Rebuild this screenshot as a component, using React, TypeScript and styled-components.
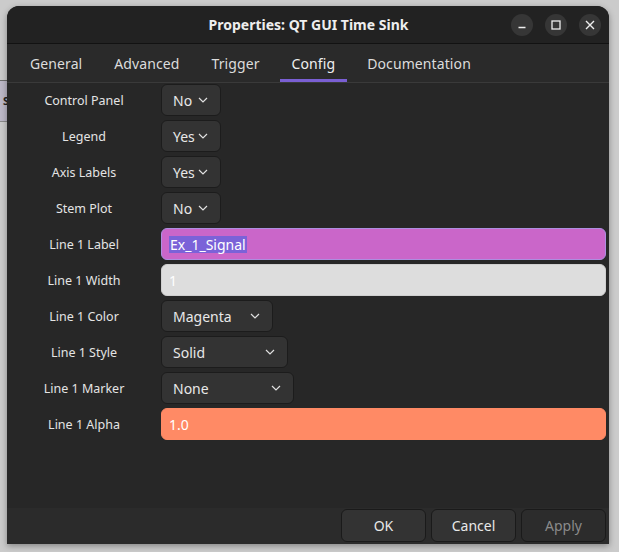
import styled, { createGlobalStyle } from "styled-components";

const GlobalStyle = createGlobalStyle`
  html, body {
    margin: 0;
    padding: 0;
    width: 619px;
    height: 552px;
    overflow: hidden;
    background: #cbcbcb;
    font-family: "Noto Sans", "DejaVu Sans", sans-serif;
  }
`;

type ComboRow = { kind: "combo"; label: string; value: string; width: number };
type FieldRow = {
  kind: "field";
  label: string;
  value: string;
  tone: "focused" | "light" | "salmon";
};
type Row = ComboRow | FieldRow;

const tabs = ["General", "Advanced", "Trigger", "Config", "Documentation"];

const rows: Row[] = [
  { kind: "combo", label: "Control Panel", value: "No", width: 60 },
  { kind: "combo", label: "Legend", value: "Yes", width: 60 },
  { kind: "combo", label: "Axis Labels", value: "Yes", width: 60 },
  { kind: "combo", label: "Stem Plot", value: "No", width: 60 },
  { kind: "field", label: "Line 1 Label", value: "Ex_1_Signal", tone: "focused" },
  { kind: "field", label: "Line 1 Width", value: "1", tone: "light" },
  { kind: "combo", label: "Line 1 Color", value: "Magenta", width: 112 },
  { kind: "combo", label: "Line 1 Style", value: "Solid", width: 127 },
  { kind: "combo", label: "Line 1 Marker", value: "None", width: 133 },
  { kind: "field", label: "Line 1 Alpha", value: "1.0", tone: "salmon" },
];

function Chevron() {
  return (
    <svg width="10" height="6" viewBox="0 0 10 6">
      <path d="M1 1l4 4 4-4" fill="none" stroke="#e0e0e0" strokeWidth="1.2" />
    </svg>
  );
}

function WindowControls() {
  return (
    <Controls>
      <CircleButton>
        <svg width="10" height="10" viewBox="0 0 10 10">
          <path d="M1.5 7.5h7" stroke="#eee" strokeWidth="1.3" />
        </svg>
      </CircleButton>
      <CircleButton>
        <svg width="10" height="10" viewBox="0 0 10 10">
          <rect x="1" y="1" width="8" height="8" fill="none" stroke="#eee" strokeWidth="1.3" />
        </svg>
      </CircleButton>
      <CircleButton>
        <svg width="10" height="10" viewBox="0 0 10 10">
          <path d="M1 1l8 8M9 1l-8 8" stroke="#eee" strokeWidth="1.4" />
        </svg>
      </CircleButton>
    </Controls>
  );
}

export default function App() {
  return (
    <>
      <GlobalStyle />
      <Desktop>
        <BehindApp>S</BehindApp>
        <Window>
          <TitleBar>
            <Title>Properties: QT GUI Time Sink</Title>
            <WindowControls />
          </TitleBar>
          <TabBar>
            {tabs.map((t) => (
              <Tab key={t} $active={t === "Config"}>
                {t}
              </Tab>
            ))}
          </TabBar>
          <Form>
            {rows.map((r) => (
              <FormRow key={r.label}>
                <Label>{r.label}</Label>
                {r.kind === "combo" ? (
                  <Combo $width={r.width}>
                    <span>{r.value}</span>
                    <Chevron />
                  </Combo>
                ) : (
                  <TextField $tone={r.tone}>
                    {r.tone === "focused" ? <Selected>{r.value}</Selected> : r.value}
                  </TextField>
                )}
              </FormRow>
            ))}
          </Form>
          <Footer>
            <DialogButton>OK</DialogButton>
            <DialogButton>Cancel</DialogButton>
            <DialogButton $disabled>Apply</DialogButton>
          </Footer>
        </Window>
      </Desktop>
    </>
  );
}

const Desktop = styled.div`
  position: relative;
  width: 619px;
  height: 552px;
  background: #cbcbcb;
`;

const BehindApp = styled.div`
  position: absolute;
  left: 0;
  top: 80px;
  width: 12px;
  height: 40px;
  background: #bcb8c7;
  border-top: 1px solid #6a6a6a;
  border-bottom: 1px solid #8a8a8a;
  color: #222;
  font-size: 11px;
  font-weight: bold;
  line-height: 40px;
  text-indent: 3px;
  overflow: hidden;
`;

const Window = styled.div`
  position: absolute;
  left: 7px;
  top: 6px;
  width: 602px;
  height: 538px;
  display: flex;
  flex-direction: column;
  background: #272727;
  border-radius: 12px 12px 0 0;
  overflow: hidden;
  box-shadow: 0 2px 6px rgba(0, 0, 0, 0.35);
`;

const TitleBar = styled.div`
  position: relative;
  height: 37px;
  flex-shrink: 0;
  display: flex;
  align-items: center;
  justify-content: center;
  background: #222222;
  border-bottom: 1px solid #121212;
`;

const Title = styled.div`
  color: #eeeeee;
  font-size: 14px;
  font-weight: bold;
  margin-left: 1px;
`;

const Controls = styled.div`
  position: absolute;
  right: 8px;
  top: 8px;
  display: flex;
  gap: 12px;
`;

const CircleButton = styled.div`
  width: 22px;
  height: 22px;
  border-radius: 50%;
  background: #363636;
  display: flex;
  align-items: center;
  justify-content: center;
`;

const TabBar = styled.div`
  height: 38px;
  flex-shrink: 0;
  display: flex;
  padding-left: 7px;
  background: #2a2a2a;
  border-bottom: 1px solid #3a3a3a;
`;

const Tab = styled.div<{ $active?: boolean }>`
  position: relative;
  padding: 0 16px;
  display: flex;
  align-items: center;
  color: ${(p) => (p.$active ? "#f0f0f0" : "#dcdcdc")};
  font-size: 14px;
  letter-spacing: 0.1px;

  &::after {
    content: "";
    position: absolute;
    left: 4px;
    right: 4px;
    bottom: 0;
    height: 3px;
    background: ${(p) => (p.$active ? "#7a5fd3" : "transparent")};
  }
`;

const Form = styled.div`
  flex: 1;
  display: flex;
  flex-direction: column;
  gap: 4px;
  padding: 1px 3px 0 0;
  background: #272727;
`;

const FormRow = styled.div`
  display: grid;
  grid-template-columns: 154px 1fr;
  height: 32px;
  align-items: center;
`;

const Label = styled.div`
  color: #e4e4e4;
  font-size: 12.5px;
  text-align: center;
`;

const Combo = styled.div<{ $width: number }>`
  box-sizing: border-box;
  width: ${(p) => p.$width}px;
  height: 32px;
  display: flex;
  align-items: center;
  justify-content: space-between;
  padding: 0 12px 0 11px;
  background: #333333;
  border: 1px solid #1c1c1c;
  border-radius: 6px;
  color: #e8e8e8;
  font-size: 14px;
`;

const toneStyles = {
  focused: "background: #ca66c9; border: 1.5px solid #ad8ee0;",
  light: "background: #dddddd; border: 1px solid #cfcfcf;",
  salmon: "background: #ff8a65; border: 1px solid #ff8a65;",
};

const TextField = styled.div<{ $tone: "focused" | "light" | "salmon" }>`
  box-sizing: border-box;
  height: 32px;
  display: flex;
  align-items: center;
  padding-left: 7px;
  border-radius: 6px;
  color: #ffffff;
  font-size: 14px;
  ${(p) => toneStyles[p.$tone]}
`;

const Selected = styled.span`
  background: #7b62d8;
  line-height: 17px;
  padding: 0 1px;
`;

const Footer = styled.div`
  height: 36px;
  flex-shrink: 0;
  display: flex;
  justify-content: flex-end;
  gap: 5px;
  padding: 1px 3px 0 0;
  box-sizing: border-box;
  background: #2b2b2b;
`;

const DialogButton = styled.div<{ $disabled?: boolean }>`
  box-sizing: border-box;
  width: 85px;
  height: 33px;
  display: flex;
  align-items: center;
  justify-content: center;
  background: ${(p) => (p.$disabled ? "#2c2c2c" : "#333333")};
  border: 1px solid #1a1a1a;
  border-radius: 6px;
  color: ${(p) => (p.$disabled ? "#8a8a8a" : "#e8e8e8")};
  font-size: 14px;
`;
